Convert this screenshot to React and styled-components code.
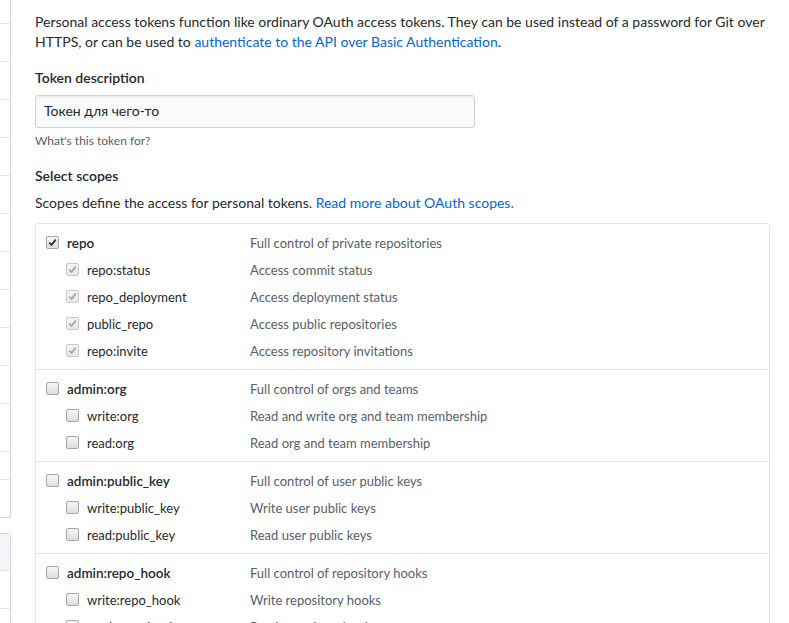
import React from "react";
import styled, { createGlobalStyle } from "styled-components";

const GlobalStyle = createGlobalStyle`
  html, body {
    margin: 0;
    padding: 0;
    background: #fff;
    overflow: hidden;
  }
  body {
    font-family: "Segoe UI", Lato, "Liberation Sans", sans-serif;
    font-size: 14px;
    color: #24292e;
  }
  * { box-sizing: border-box; }
`;

const Page = styled.div`
  display: flex;
  align-items: flex-start;
  gap: 24px;
  height: 623px;
`;

const Sidebar = styled.div`
  width: 11px;
  flex-shrink: 0;
  display: flex;
  flex-direction: column;
  gap: 15px;
`;

const SideMenu = styled.div`
  display: flex;
  flex-direction: column;
  border-right: 1px solid #d1d5da;
  ${(p) =>
    p.$top
      ? `border-bottom: 1px solid #d1d5da; border-bottom-right-radius: 3px;`
      : `border-top: 1px solid #d1d5da; border-top-right-radius: 3px;`}
`;

const SideItem = styled.div`
  height: ${(p) => p.$h}px;
  border-bottom: ${(p) => (p.$last ? "none" : "1px solid #e1e4e8")};
  background: ${(p) => (p.$selected ? "#f3f5f8" : "transparent")};
`;

const Main = styled.div`
  width: 735px;
  padding-top: 12px;
`;

const Intro = styled.p`
  margin: 0;
  line-height: 20px;
`;

const Link = styled.a`
  color: #0366d6;
  text-decoration: none;
`;

const Label = styled.div`
  font-weight: 600;
  line-height: 20px;
  margin-top: ${(p) => p.$mt}px;
`;

const Input = styled.input`
  display: block;
  margin-top: 7px;
  width: 440px;
  height: 33px;
  padding: 0 8px 2px;
  font: inherit;
  font-size: 14px;
  color: #24292e;
  background: #fafbfc;
  border: 1px solid #d1d5da;
  border-radius: 3px;
  box-shadow: inset 0 1px 2px rgba(27, 31, 35, 0.075);
  outline: none;
`;

const Note = styled.div`
  margin-top: 4px;
  font-size: 12px;
  line-height: 18px;
  color: #586069;
`;

const ScopesDesc = styled.p`
  margin: 7px 0 0;
  line-height: 20px;
`;

const ScopesBox = styled.div`
  margin-top: 10px;
  border: 1px solid #e1e4e8;
  border-radius: 3px;
  font-size: 13px;
`;

const Group = styled.div`
  padding: 5px 0;
  border-top: ${(p) => (p.$first ? "none" : "1px solid #e1e4e8")};
`;

const Row = styled.div`
  display: flex;
  align-items: center;
  height: 27px;
`;

const NameCell = styled.label`
  display: flex;
  align-items: center;
  width: 214px;
  flex-shrink: 0;
  padding-left: ${(p) => (p.$sub ? 30 : 10)}px;
  gap: 8px;
  font-size: ${(p) => (p.$sub ? 13 : 13.5)}px;
  font-weight: ${(p) => (p.$sub ? 400 : 600)};
  color: #24292e;
`;

const Desc = styled.span`
  color: #586069;
`;

const Box = styled.span`
  display: inline-flex;
  align-items: center;
  justify-content: center;
  width: 13px;
  height: 13px;
  flex-shrink: 0;
  border: 1px solid ${(p) => (p.$disabled ? "#c8c8c8" : "#a6a6a6")};
  border-radius: 2px;
  background: ${(p) =>
    p.$disabled
      ? "linear-gradient(#f4f4f4, #e8e8e8)"
      : "linear-gradient(#f6f6f6, #dedede)"};
`;

function Checkbox({ checked, disabled }) {
  return (
    <Box $disabled={disabled}>
      {checked && (
        <svg width="9" height="9" viewBox="0 0 9 9">
          <path
            d="M1.2 4.6 L3.5 6.9 L7.8 1.6"
            fill="none"
            stroke={disabled ? "#a8a8a8" : "#333"}
            strokeWidth="1.8"
          />
        </svg>
      )}
    </Box>
  );
}

const groups = [
  {
    name: "repo",
    desc: "Full control of private repositories",
    checked: true,
    children: [
      ["repo:status", "Access commit status"],
      ["repo_deployment", "Access deployment status"],
      ["public_repo", "Access public repositories"],
      ["repo:invite", "Access repository invitations"],
    ],
  },
  {
    name: "admin:org",
    desc: "Full control of orgs and teams",
    children: [
      ["write:org", "Read and write org and team membership"],
      ["read:org", "Read org and team membership"],
    ],
  },
  {
    name: "admin:public_key",
    desc: "Full control of user public keys",
    children: [
      ["write:public_key", "Write user public keys"],
      ["read:public_key", "Read user public keys"],
    ],
  },
  {
    name: "admin:repo_hook",
    desc: "Full control of repository hooks",
    children: [
      ["write:repo_hook", "Write repository hooks"],
      ["read:repo_hook", "Read repository hooks"],
    ],
  },
];

const topMenu = [24, 38, 38, 38, 38, 38, 38, 38, 38, 38, 38, 48, 28, 37];
const bottomMenu = [37, 38, 38];

export default function App() {
  return (
    <>
      <GlobalStyle />
      <Page>
        <Sidebar>
          <SideMenu $top>
            {topMenu.map((h, i) => (
              <SideItem key={i} $h={h} $last={i === topMenu.length - 1} />
            ))}
          </SideMenu>
          <SideMenu>
            {bottomMenu.map((h, i) => (
              <SideItem key={i} $h={h} $selected={i === 0} />
            ))}
          </SideMenu>
        </Sidebar>
        <Main>
          <Intro>
            Personal access tokens function like ordinary OAuth access tokens. They can be used instead of a password for Git over
            <br />
            HTTPS, or can be used to{" "}
            <Link href="#">authenticate to the API over Basic Authentication</Link>.
          </Intro>
          <Label $mt={16}>Token description</Label>
          <Input defaultValue="Токен для чего-то" />
          <Note>What's this token for?</Note>
          <Label $mt={16}>Select scopes</Label>
          <ScopesDesc>
            Scopes define the access for personal tokens.{" "}
            <Link href="#">Read more about OAuth scopes.</Link>
          </ScopesDesc>
          <ScopesBox>
            {groups.map((g, gi) => (
              <Group key={g.name} $first={gi === 0}>
                <Row>
                  <NameCell>
                    <Checkbox checked={g.checked} />
                    {g.name}
                  </NameCell>
                  <Desc>{g.desc}</Desc>
                </Row>
                {g.children.map(([n, d]) => (
                  <Row key={n}>
                    <NameCell $sub>
                      <Checkbox checked={g.checked} disabled={g.checked} />
                      {n}
                    </NameCell>
                    <Desc>{d}</Desc>
                  </Row>
                ))}
              </Group>
            ))}
          </ScopesBox>
        </Main>
      </Page>
    </>
  );
}
